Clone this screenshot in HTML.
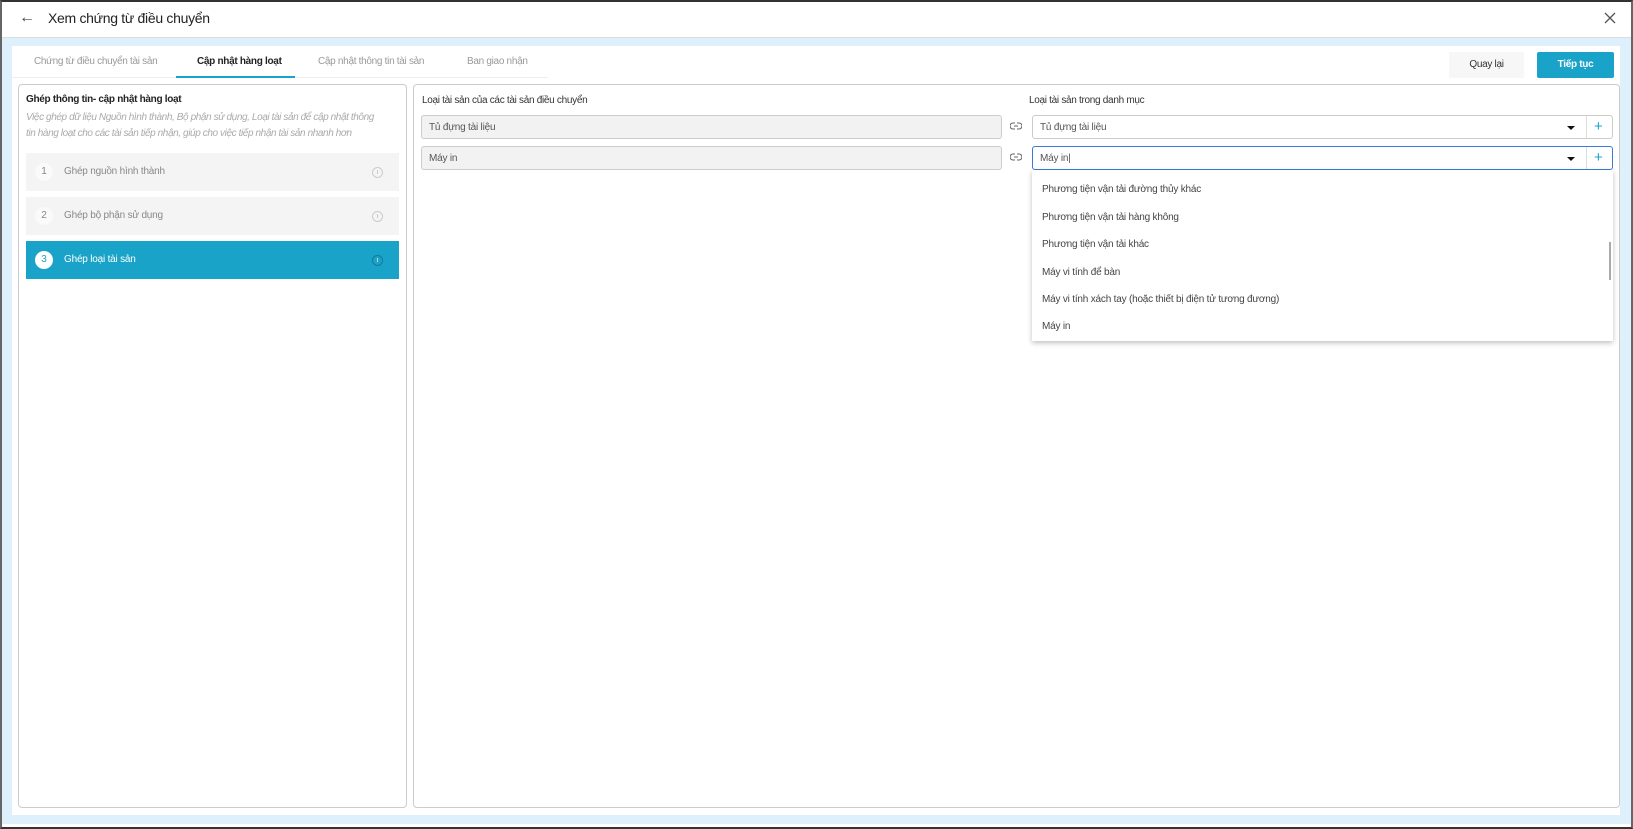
<!DOCTYPE html>
<html><head><meta charset="utf-8"><style>
*{margin:0;padding:0;box-sizing:border-box}
body{width:1633px;height:829px;background:#fff;font-family:"Liberation Sans",sans-serif;position:relative;overflow:hidden;color:#333}
.a{position:absolute}
.t{font-size:10px;letter-spacing:-0.3px;white-space:nowrap}
.inp{position:absolute;background:#f2f2f2;border:1px solid #ccc;border-radius:3px;font-size:10px;color:#555;padding:1px 7px 0;line-height:22px;letter-spacing:-0.2px}
.sel{position:absolute;background:#fff;border:1px solid #ccc;border-radius:3px;font-size:10px;color:#555;padding:1px 7px 0;line-height:22px;letter-spacing:-0.2px}
.step{position:absolute;left:26px;width:373px;height:38px;background:#f4f4f4}
.step .c{position:absolute;left:9px;top:10px;width:18px;height:18px;border-radius:50%;background:#fafafa;color:#888;font-size:10px;text-align:center;line-height:18px}
.step .l{position:absolute;left:38px;top:13px;font-size:10px;color:#888;letter-spacing:-0.2px}
.step .i{position:absolute;left:346px;top:14px;width:11px;height:11px;border:1px solid #ccc;border-radius:50%}
.step .i:after{content:"";position:absolute;left:4px;top:2px;width:1px;height:4px;background:#ccc}
.dd{position:absolute;left:1032px;top:170px;width:581px;height:171px;background:#fff;box-shadow:0 2px 5px rgba(0,0,0,.25)}
.dd div{position:absolute;left:10px;font-size:10px;color:#444;letter-spacing:-0.2px}
</style></head><body>
<div class="a" style="left:0;top:0;width:1633px;height:829px;border:2px solid #333;border-left-color:#666;border-right-color:#666"></div>
<div class="a" style="left:2px;top:2px;width:1629px;height:36px;background:#fff;border-bottom:1px solid #ddd"></div>
<div class="a" style="left:19px;top:9px;font-size:16px;color:#444">&#8592;</div>
<div class="a" style="left:48px;top:10px;font-size:14px;color:#222;letter-spacing:-0.3px">Xem chứng từ điều chuyển</div>
<svg class="a" style="left:1604px;top:12px" width="12" height="12" viewBox="0 0 12 12"><path d="M1 1L11 11M11 1L1 11" stroke="#555" stroke-width="1.3"/></svg>
<div class="a" style="left:2px;top:38px;width:1629px;height:786px;background:#ddf0fc"></div>
<div class="a" style="left:12px;top:46px;width:1608px;height:769px;background:#fff"></div>
<div class="a" style="left:12px;top:77px;width:536px;height:1px;background:#eee"></div>
<div class="a t" style="left:34px;top:56px;color:#999">Chứng từ điều chuyển tài sản</div>
<div class="a t" style="left:197px;top:56px;color:#222;font-weight:bold">Cập nhật hàng loạt</div>
<div class="a t" style="left:318px;top:56px;color:#999">Cập nhật thông tin tài sản</div>
<div class="a t" style="left:467px;top:56px;color:#999">Ban giao nhận</div>
<div class="a" style="left:176px;top:76px;width:119px;height:2px;background:#1aa3c8"></div>
<div class="a t" style="left:1449px;top:52px;width:75px;height:26px;background:#f7f7f7;line-height:26px;text-align:center;color:#333">Quay lại</div>
<div class="a t" style="left:1537px;top:52px;width:77px;height:26px;background:#1aa3c8;border-radius:2px;line-height:26px;text-align:center;color:#fff;font-weight:bold">Tiếp tục</div>
<div class="a" style="left:18px;top:84px;width:389px;height:724px;border:1px solid #ccc;border-radius:4px"></div>
<div class="a" style="left:413px;top:84px;width:1207px;height:724px;border:1px solid #ccc;border-radius:4px"></div>
<div class="a t" style="left:26px;top:94px;font-weight:bold;color:#222">Ghép thông tin- cập nhật hàng loạt</div>
<div class="a t" style="left:26px;top:110px;font-style:italic;color:#aaa;line-height:16px;letter-spacing:-0.4px">Việc ghép dữ liệu Nguồn hình thành, Bộ phận sử dụng, Loại tài sản để cập nhật thông<br>tin hàng loạt cho các tài sản tiếp nhận, giúp cho việc tiếp nhận tài sản nhanh hơn</div>
<div class="step" style="top:153px"><div class="c">1</div><div class="l">Ghép nguồn hình thành</div><div class="i"></div></div>
<div class="step" style="top:197px"><div class="c">2</div><div class="l">Ghép bộ phận sử dụng</div><div class="i"></div></div>
<div class="step" style="top:241px;background:#1aa3c8"><div class="c" style="background:#fff;color:#1aa3c8">3</div><div class="l" style="color:#fff">Ghép loại tài sản</div><div class="i" style="border-color:#14799a"></div></div>
<div class="a t" style="left:422px;top:95px;color:#333">Loại tài sản của các tài sản điều chuyển</div>
<div class="a t" style="left:1029px;top:95px;color:#333">Loại tài sản trong danh mục</div>
<div class="inp" style="left:421px;top:115px;width:581px;height:24px">Tủ đựng tài liệu</div>
<div class="inp" style="left:421px;top:146px;width:581px;height:24px">Máy in</div>
<svg class="a" style="left:1010px;top:122px" width="12" height="8" viewBox="0 0 12 8"><path d="M5 1H3a3 3 0 0 0 0 6h2M7 1h2a3 3 0 0 1 0 6H7M4 4h4" stroke="#666" fill="none" stroke-width="1.1"/></svg>
<svg class="a" style="left:1010px;top:153px" width="12" height="8" viewBox="0 0 12 8"><path d="M5 1H3a3 3 0 0 0 0 6h2M7 1h2a3 3 0 0 1 0 6H7M4 4h4" stroke="#666" fill="none" stroke-width="1.1"/></svg>
<div class="sel" style="left:1032px;top:115px;width:581px;height:24px">Tủ đựng tài liệu</div>
<div class="sel" style="left:1032px;top:146px;width:581px;height:24px;border-color:#3b7bd8">Máy in|</div>
<div class="a" style="left:1586px;top:116px;width:1px;height:22px;background:#ddd"></div>
<div class="a" style="left:1586px;top:147px;width:1px;height:22px;background:#ddd"></div>
<div class="a" style="left:1567px;top:126px;border:4px solid transparent;border-top:4px solid #111;border-bottom:0"></div>
<div class="a" style="left:1567px;top:157px;border:4px solid transparent;border-top:4px solid #111;border-bottom:0"></div>
<div class="a" style="left:1594px;top:118px;font-size:15px;color:#1aa3c8">+</div>
<div class="a" style="left:1594px;top:149px;font-size:15px;color:#1aa3c8">+</div>
<div class="dd">
<div style="top:14px">Phương tiện vận tải đường thủy khác</div>
<div style="top:42px">Phương tiện vận tải hàng không</div>
<div style="top:69px">Phương tiện vận tải khác</div>
<div style="top:97px">Máy vi tính để bàn</div>
<div style="top:124px">Máy vi tính xách tay (hoặc thiết bị điện tử tương đương)</div>
<div style="top:151px">Máy in</div>
<span style="position:absolute;left:577px;top:72px;width:2px;height:38px;background:#aaa"></span>
</div>
</body></html>
